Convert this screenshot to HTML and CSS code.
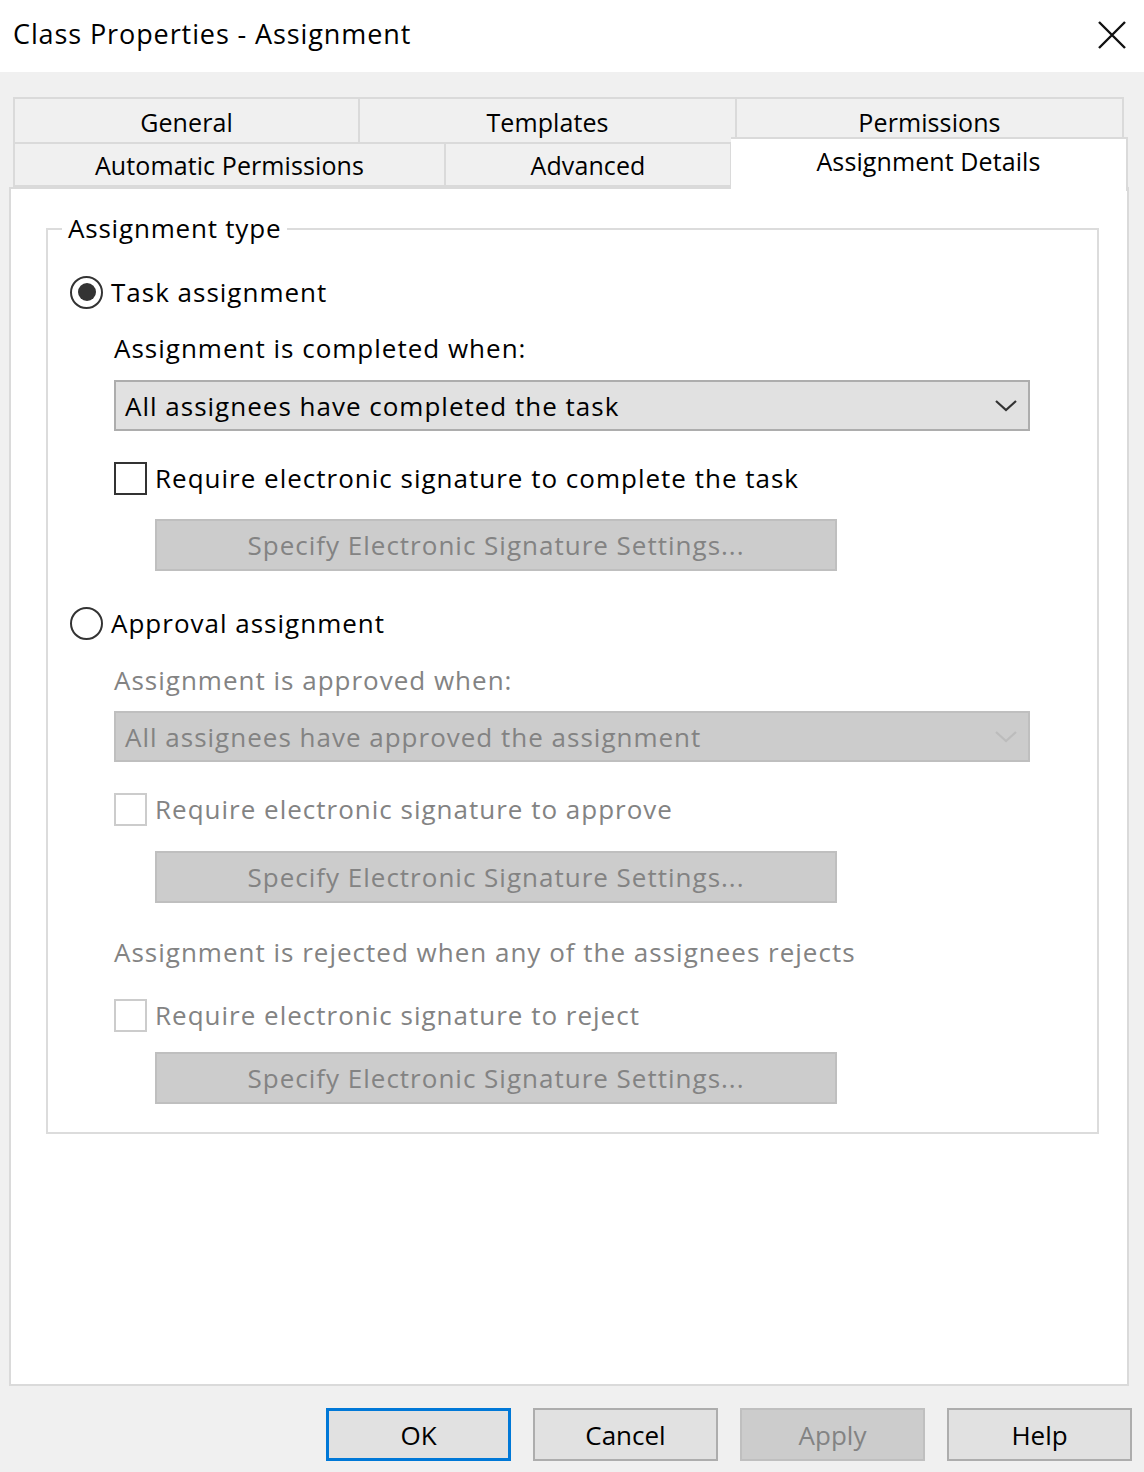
FILE: index.html
```html
<!DOCTYPE html>
<html>
<head>
<meta charset="utf-8">
<link rel="stylesheet" href="styles.css">
</head>
<body>
<div class="window">
  <div class="titlebar">
    <span class="title">Class Properties - Assignment</span>
    <svg class="close" width="30" height="30" viewBox="0 0 30 30"><path d="M2 2 L28 28 M28 2 L2 28" stroke="#111" stroke-width="2.4" fill="none"/></svg>
  </div>
  <div class="body">
    <div class="tabs">
      <div class="tabrow row1">
        <div class="tab t-general">General</div>
        <div class="tab t-templates">Templates</div>
        <div class="tab t-perm">Permissions</div>
      </div>
      <div class="tabrow row2">
        <div class="tab t-auto">Automatic Permissions</div>
        <div class="tab t-adv">Advanced</div>
        <div class="tab t-details selected">Assignment Details</div>
      </div>
    </div>
    <div class="panel">
      <div class="group">
        <div class="legend">Assignment type</div>

        <div class="row radio-row r1">
          <span class="radio checked"><span class="dot"></span></span>
          <span class="lbl">Task assignment</span>
        </div>
        <div class="indent">
          <div class="row text-row l1">Assignment is completed when:</div>
          <div class="select s1">
            <span>All assignees have completed the task</span>
            <svg class="chev" width="24" height="14" viewBox="0 0 24 14"><path d="M2 2 L12 11 L22 2" stroke="#333" stroke-width="2.2" fill="none"/></svg>
          </div>
          <div class="row check-row c1">
            <span class="check"></span>
            <span class="lbl">Require electronic signature to complete the task</span>
          </div>
          <div class="btn-wrap b1"><div class="sigbtn">Specify Electronic Signature Settings...</div></div>
        </div>

        <div class="row radio-row r2">
          <span class="radio"></span>
          <span class="lbl">Approval assignment</span>
        </div>
        <div class="indent disabled">
          <div class="row text-row l2">Assignment is approved when:</div>
          <div class="select s2 dis">
            <span>All assignees have approved the assignment</span>
            <svg class="chev" width="24" height="14" viewBox="0 0 24 14"><path d="M2 2 L12 11 L22 2" stroke="#bcbcbc" stroke-width="2.2" fill="none"/></svg>
          </div>
          <div class="row check-row c2">
            <span class="check dis"></span>
            <span class="lbl">Require electronic signature to approve</span>
          </div>
          <div class="btn-wrap b2"><div class="sigbtn">Specify Electronic Signature Settings...</div></div>
          <div class="row text-row l3">Assignment is rejected when any of the assignees rejects</div>
          <div class="row check-row c3">
            <span class="check dis"></span>
            <span class="lbl">Require electronic signature to reject</span>
          </div>
          <div class="btn-wrap b3"><div class="sigbtn">Specify Electronic Signature Settings...</div></div>
        </div>
      </div>
    </div>
    <div class="buttons">
      <div class="dbtn ok">OK</div>
      <div class="dbtn">Cancel</div>
      <div class="dbtn dis">Apply</div>
      <div class="dbtn">Help</div>
    </div>
  </div>
</div>
</body>
</html>
```
FILE: styles.css
```css
* { box-sizing: border-box; }
html, body { margin: 0; padding: 0; }
body {
  width: 1144px;
  height: 1472px;
  background: #f0f0f0;
  font-family: "Open Sans", "Noto Sans", "DejaVu Sans", sans-serif;
  color: #000;
  overflow: hidden;
}
.window { width: 1144px; height: 1472px; }
.titlebar {
  height: 72px;
  background: #fff;
  display: flex;
  align-items: center;
  justify-content: space-between;
  padding: 0 17px 6px 13px;
}
.title { font-size: 27px; letter-spacing: 0.9px; }
.close { margin-top: 4px; }

.body { padding: 25px 0 0 9px; }

.tabs { margin-left: 4px; }
.tabrow { display: flex; }
.tab {
  display: flex;
  align-items: center;
  justify-content: center;
  background: #f0f0f0;
  border: 2px solid #dadada;
  font-size: 25px;
  letter-spacing: 0.1px;
}
.row1 .tab { height: 45px; border-bottom: none; padding-top: 2px; }
.row1 .tab + .tab { border-left: none; }
.t-general { width: 347px; }
.t-templates { width: 377px; }
.t-perm { width: 387px; }
.row2 { align-items: flex-start; height: 45px; }
.row2 .tab { height: 45px; }
.row2 .tab + .tab { border-left: none; }
.t-auto { width: 433px; }
.t-adv { width: 286px; }
.t-details.selected {
  width: 397px;
  height: 54px;
  margin-top: -5px;
  background: #fff;
  border-bottom: none;
  border-left: 2px solid #dadada;
  margin-left: -1px;
  padding-bottom: 8px;
  position: relative;
  z-index: 1;
}

.panel {
  width: 1120px;
  height: 1199px;
  background: #fff;
  border: 2px solid #dadada;
  padding: 39px 0 0 35px;
}

.group {
  width: 1053px;
  border: 2px solid #dcdcdc;
  padding: 0 0 28px 22px;
  font-size: 26px;
  letter-spacing: 1px;
}
.legend {
  width: fit-content;
  height: 36px;
  line-height: 36px;
  margin: -20px 0 0 -8px;
  padding: 0 6px;
  background: #fff;
  font-size: 26px;
  letter-spacing: 0.8px;
}
.row {
  display: flex;
  align-items: center;
  height: 40px;
}
.radio {
  width: 33px;
  height: 33px;
  border: 2.5px solid #333;
  border-radius: 50%;
  display: flex;
  align-items: center;
  justify-content: center;
  margin-right: 8px;
  flex: none;
}
.radio .dot {
  width: 18px;
  height: 18px;
  border-radius: 50%;
  background: #333;
}
.indent { padding-left: 44px; }
.r1 { margin-top: 26px; }
.l1 { margin-top: 16px; }
.s1 { margin-top: 12px; }
.c1 { margin-top: 27px; }
.b1 { margin-top: 21px; }
.r2 { margin-top: 32px; }
.l2 { margin-top: 17px; }
.s2 { margin-top: 11px; }
.c2 { margin-top: 27px; }
.b2 { margin-top: 22px; }
.l3 { margin-top: 29px; }
.c3 { margin-top: 23px; }
.b3 { margin-top: 17px; }

.select {
  width: 916px;
  height: 51px;
  background: #e1e1e1;
  border: 2px solid #adadad;
  display: flex;
  align-items: center;
  justify-content: space-between;
  padding: 0 10px 0 9px;
}
.select.dis { background: #cccccc; border-color: #bfbfbf; color: #838383; }
.check {
  width: 33px;
  height: 33px;
  border: 2px solid #333;
  margin-right: 8px;
  background: #fff;
  flex: none;
}
.check.dis { border-color: #cccccc; }
.btn-wrap { padding-left: 41px; }
.sigbtn {
  width: 682px;
  height: 52px;
  background: #cccccc;
  border: 2px solid #bfbfbf;
  color: #838383;
  display: flex;
  align-items: center;
  justify-content: center;
}
.disabled .text-row, .disabled .lbl { color: #838383; }

.buttons {
  display: flex;
  justify-content: flex-end;
  gap: 22px;
  margin-top: 22px;
  padding-right: 12px;
}
.dbtn {
  width: 185px;
  height: 53px;
  background: #e1e1e1;
  border: 2px solid #adadad;
  display: flex;
  align-items: center;
  justify-content: center;
  font-size: 26px;
  letter-spacing: 0px;
}
.dbtn.ok { border: 3px solid #0078d7; }
.dbtn.dis { background: #cccccc; border-color: #bfbfbf; color: #838383; }
```
